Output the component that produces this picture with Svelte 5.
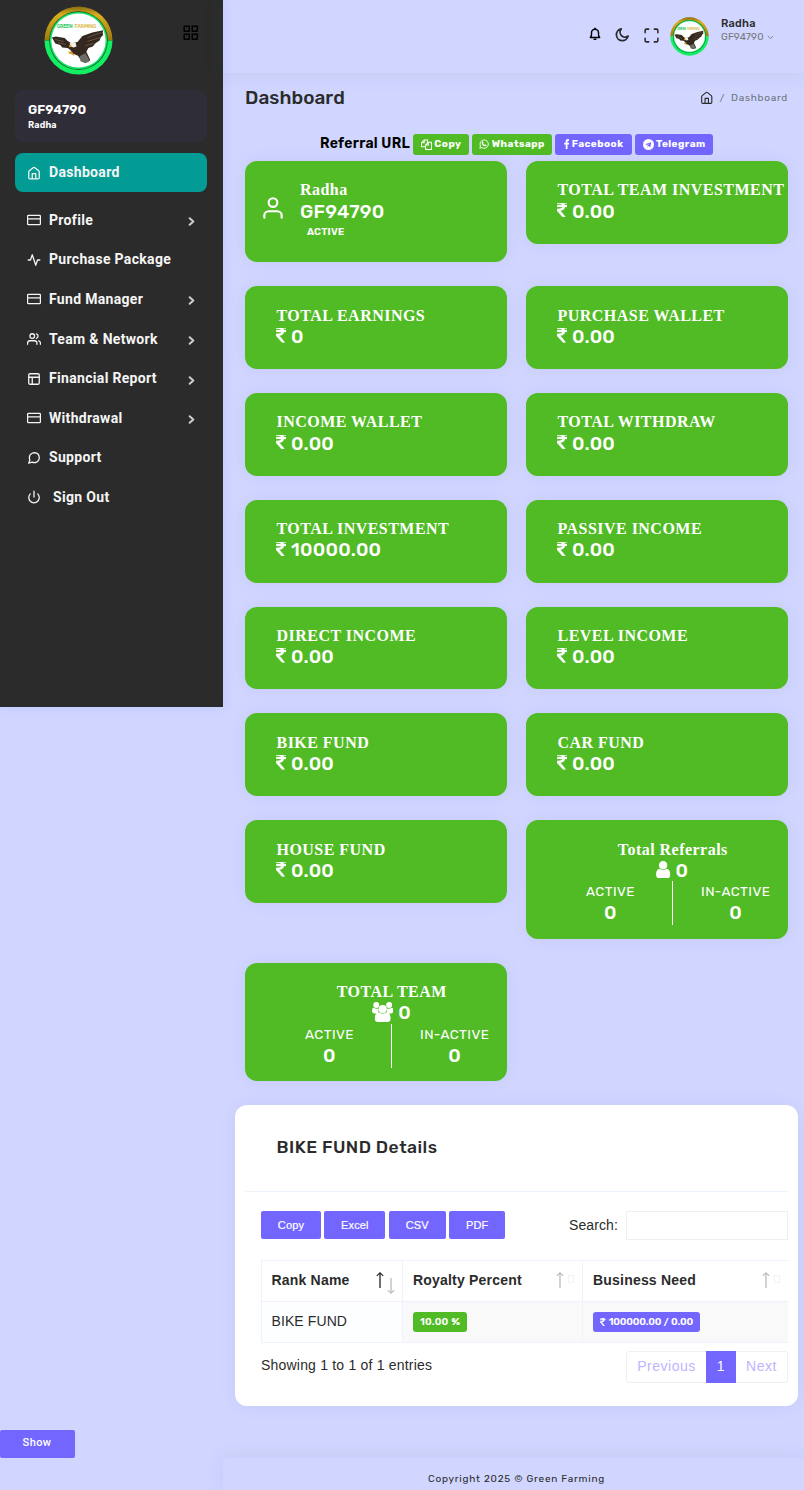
<script>
  const menu = [
    { label: 'Dashboard', icon: 'home', active: true },
    { label: 'Profile', icon: 'card', sub: true },
    { label: 'Purchase Package', icon: 'pulse' },
    { label: 'Fund Manager', icon: 'card', sub: true },
    { label: 'Team & Network', icon: 'users', sub: true },
    { label: 'Financial Report', icon: 'layout', sub: true },
    { label: 'Withdrawal', icon: 'card', sub: true },
    { label: 'Support', icon: 'chat' },
    { label: 'Sign Out', icon: 'power', indent: true }
  ];
  const funds = [
    ['TOTAL EARNINGS', '0'],
    ['PURCHASE WALLET', '0.00'],
    ['INCOME WALLET', '0.00'],
    ['TOTAL WITHDRAW', '0.00'],
    ['TOTAL INVESTMENT', '10000.00'],
    ['PASSIVE INCOME', '0.00'],
    ['DIRECT INCOME', '0.00'],
    ['LEVEL INCOME', '0.00'],
    ['BIKE FUND', '0.00'],
    ['CAR FUND', '0.00'],
    ['HOUSE FUND', '0.00']
  ];
  const exports = [['Copy', 60], ['Excel', 61], ['CSV', 57], ['PDF', 56]];
</script>

{#snippet logo(size)}
  <svg width={size} height={size} viewBox="0 0 70 70">
    <defs>
      <linearGradient id="gold{size}" x1="0" x2="0" y1="0" y2="1">
        <stop offset="0" stop-color="#8a6a10" /><stop offset=".25" stop-color="#d9ae1c" /><stop offset="1" stop-color="#9a7a10" />
      </linearGradient>
    </defs>
    <path d="M.5 35a34.5 34.5 0 0 1 69 0z" fill="url(#gold{size})" />
    <path d="M.5 35a34.5 34.5 0 0 0 69 0z" fill="#14ee62" />
    <circle cx="35" cy="35" r="29.7" fill="#174d2b" />
    <circle cx="35" cy="35" r="29" fill="#14e565" />
    <circle cx="35" cy="35" r="27.5" fill="#fff" />
    <text x="13" y="22.7" font-size="5.2" font-weight="500" textLength="16" fill="#18c860">GREEN</text>
    <text x="31" y="22.7" font-size="5.2" font-weight="500" textLength="22" fill="#dcb640">FARMING</text>
    <path d="M8 32l4-1 9 1.500 3 3 3.500 2 6.500-1 5-6 10-3.500 11-2.500-.5 3 .5 2-2.500 2.500-1 3-4 2.500-3 3.500-4.500 1.500-2 4 4 8.500-3 2-5.500-.5-4-6-5-2-3-4-2.500-2-5.500-.5-2-2.500-5-1.500z" fill="#342820" />
    <path d="M11 34l9 2M14 37l8 2M58 27l-14 5M57 32l-13 4M51 38l-9 2" stroke="#715d4a" stroke-width=".8" />
    <path d="M36 51l6-3 3 5 1 3-4 2-5-2z" fill="#6c6c66" />
    <path d="M26 38l2-2 4 1 1 4-3 1-3-1z" fill="#f4eee3" />
    <path d="M25 40l2-1 1 2-2 1zM25 46l4 1 2 4-3-2-3-1z" fill="#d99b1c" />
  </svg>
{/snippet}

{#snippet icon(name, size = 16, sw = 2)}
  <svg width={size} height={size} viewBox="0 0 24 24" fill="none" stroke="currentColor" stroke-width={sw} stroke-linecap="round" stroke-linejoin="round">
    {#if name === 'home'}<path d="M3 10.2Q3 9 4 8.2l6.6-5.4q1.4-1.1 2.8 0L20 8.2q1 .8 1 2V20q0 2-2 2H5q-2 0-2-2zM9 22v-9h6v9" />
    {:else if name === 'card'}<rect x="1" y="4" width="22" height="16" rx="1.5" /><path d="M1 10h22" />
    {:else if name === 'pulse'}<path d="M22 12h-4l-3 9L9 3l-3 9H2" />
    {:else if name === 'users'}<path d="M17 21v-2a4 4 0 0 0-4-4H5a4 4 0 0 0-4 4v2M23 21v-2a4 4 0 0 0-3-3.87M16 3.13a4 4 0 0 1 0 7.75" /><circle cx="9" cy="7" r="4" />
    {:else if name === 'layout'}<rect x="3" y="3" width="18" height="18" rx="2" /><path d="M3 9h18M9 21V9" />
    {:else if name === 'chat'}<path d="M21 11.5a8.38 8.38 0 0 1-.9 3.8 8.5 8.5 0 0 1-7.6 4.7 8.38 8.38 0 0 1-3.8-.9L3 21l1.9-5.7a8.38 8.38 0 0 1-.9-3.8 8.5 8.5 0 0 1 4.7-7.6 8.38 8.38 0 0 1 3.8-.9h.5a8.48 8.48 0 0 1 8 8z" />
    {:else if name === 'power'}<path d="M18.36 6.64a9 9 0 1 1-12.73 0M12 2v10" />
    {:else if name === 'user'}<path d="M20 21v-2a4 4 0 0 0-4-4H8a4 4 0 0 0-4 4v2" /><circle cx="12" cy="7" r="4" />
    {:else if name === 'grid'}<rect x="3" y="3" width="7" height="7" /><rect x="14" y="3" width="7" height="7" /><rect x="14" y="14" width="7" height="7" /><rect x="3" y="14" width="7" height="7" />
    {:else if name === 'expand'}<path d="M8 3H5a2 2 0 0 0-2 2v3M16 3h3a2 2 0 0 1 2 2v3M21 16v3a2 2 0 0 1-2 2h-3M3 16v3a2 2 0 0 0 2 2h3" />
    {:else if name === 'bell'}<path d="M4 18h16q-2-2-2-5v-3a6 6 0 0 0-12 0v3q0 3-2 5z" /><path d="M10.5 21h3M12 2v2" />
    {:else if name === 'moon'}<path d="M21 14.5A9.5 9.5 0 1 1 10 3a8 8 0 0 0 11 11.5z" />
    {:else if name === 'right'}<path d="M8 5l8 7-8 7" />
    {:else if name === 'down'}<path d="M4 8l8 8 8-8" />
    {/if}
  </svg>
{/snippet}

{#snippet arrow(down = false)}
  <svg class="arrow" class:down width="8" height="16" viewBox="0 0 8 16" fill="none" stroke="currentColor"><path d="M4 1v15" stroke-width="1.300" /><path d="M.800 3.800L4 .800l3.200 3" stroke-width="1.100" /></svg>
{/snippet}

{#snippet glyph(name, h)}
  {#if name === 'inr'}
    <svg class="glyph" height={h} width={h * 0.71} viewBox="446 256 900 1280" fill="currentColor"><path stroke="currentColor" stroke-width="20" d="M1345 470v102q0 14-9 23t-23 9h-168q-23 144-129 234t-276 110q167 178 459 536 14 16 4 34-8 18-29 18h-195q-16 0-25-12-306-367-498-571-9-9-9-22v-127q0-13 9.5-22.5t22.5-9.5h112q132 0 212.500-43t102.500-125h-427q-14 0-23-9t-9-23v-102q0-14 9-23t23-9h413q-57-113-268-113h-145q-13 0-22.500-9.500t-9.500-22.500v-133q0-14 9-23t23-9h832q14 0 23 9t9 23v102q0 14-9 23t-23 9h-233q47 61 64 144h171q14 0 23 9t9 23z" /></svg>
  {:else if name === 'person'}
    <svg class="glyph" height={h} width={h * 0.84} viewBox="256 128 1280 1536" fill="currentColor"><path d="M1536 1399q0 109-62.5 187t-150.5 78h-854q-88 0-150.5-78t-62.5-187q0-85 8.5-160.5t31.5-152 58.5-131 94-89 134.5-34.5q131 128 313 128t313-128q76 0 134.5 34.5t94 89 58.5 131 31.5 152 8.5 160.5zm-256-887q0 159-112.5 271.5t-271.5 112.5-271.5-112.5-112.5-271.5 112.5-271.5 271.5-112.5 271.5 112.5 112.5 271.5z" /></svg>
  {:else if name === 'people'}
    <svg class="glyph" height={h} width={h * 1.07} viewBox="0 0 30 28" fill="currentColor"><circle cx="6" cy="4.200" r="4.200" /><circle cx="24" cy="4.200" r="4.200" /><path d="M0 12.500Q0 8 2.500 8 6 10.500 9.500 9 8.500 13.500 9 16H3q-3 0-3-3.500zM30 12.500Q30 8 27.500 8 24 10.500 20.500 9q1 4.500.5 7h6q3 0 3-3.500z" /><circle cx="15" cy="10" r="5.700" /><path d="M4 23.500q0-9 5.200-9 5.800 4 11.600 0 5.200 0 5.200 9 0 4.500-4.500 4.500h-13Q4 28 4 23.500z" /></svg>
  {:else if name === 'copy'}
    <svg class="glyph" height={h} width={h} viewBox="0 0 24 24" fill="none" stroke="currentColor" stroke-width="2.200"><path d="M10 17H1V8l6-6h7v5M7 2v6H1M10 13l6-6h7v16H10zM16 7v6h-6" /></svg>
  {:else if name === 'whatsapp'}
    <svg class="glyph" height={h} width={h} viewBox="0 0 24 24"><path d="M2 22l1.500-5.200A10 10 0 1 1 7 20.700z" fill="none" stroke="currentColor" stroke-width="2.200" /><path d="M7 7q2-2 3 0l.8 2q0 1-1 1.700 1.400 2.600 4 3.500l1.500-1.500 2.700 1.500q0 3-3 3.200Q8 17 6.500 9.500q0-1.500.5-2.500z" fill="currentColor" /></svg>
  {:else if name === 'facebook'}
    <svg class="glyph" height={h} width={h * 0.55} viewBox="479 0 864 1664" fill="currentColor"><path d="M1343 12v264h-157q-86 0-116 36t-30 108v189h293l-39 296h-254v759h-306v-759h-255v-296h255v-218q0-186 104-288.500t277-102.500q147 0 228 12z" /></svg>
  {:else if name === 'telegram'}
    <svg class="glyph" height={h} width={h} viewBox="0 0 24 24"><path fill="currentColor" fill-rule="evenodd" d="M12 0a12 12 0 1 0 0 24 12 12 0 0 0 0-24zm6 6.500L15.700 18l-3.800-2.700-2.200 2-.4-4L5 11.700zm-2.300 2.300L9.300 13l1 2.200.3-1.500z" /></svg>
  {/if}
{/snippet}

<div class="page">
  <div class="left">
    <aside>
      <div class="brand">{@render logo(69)}<span>{@render icon('grid', 17.500, 2)}</span></div>
      <div class="account"><b>GF94790</b><small>Radha</small></div>
      <nav>
        {#each menu as m}
          <a class:active={m.active}>
            <i>{@render icon(m.icon, 14, 2.200)}</i><span class:indent={m.indent}>{m.label}</span>
            {#if m.sub}<em>{@render icon('right', 11, 4.500)}</em>{/if}
          </a>
        {/each}
      </nav>
    </aside>
    <button class="show">Show</button>
  </div>

  <div class="main">
    <header>
      <span class="bell">{@render icon('bell', 14, 2.500)}</span>
      <span class="moon">{@render icon('moon', 15, 2.800)}</span>
      <span class="expand">{@render icon('expand', 17, 2.200)}</span>
      {@render logo(39)}
      <div class="who"><b>Radha</b><span>GF94790 {@render icon('down', 7, 3)}</span></div>
    </header>
    <div class="title">
      <h1>Dashboard</h1>
      <div class="crumbs">{@render icon('home', 13.500, 2)}<span>/</span><span class="here">Dashboard</span></div>
    </div>
    <div class="referral">
      <b>Referral URL</b>
      <span class="tag green" style:width="56px">{@render glyph('copy', 11)}Copy</span>
      <span class="tag green" style:width="80px">{@render glyph('whatsapp', 10)}Whatsapp</span>
      <span class="tag" style:width="77px">{@render glyph('facebook', 10)}Facebook</span>
      <span class="tag" style:width="78px">{@render glyph('telegram', 11)}Telegram</span>
    </div>

    <section class="cards">
      <div class="card member">
        {@render icon('user', 26, 2)}
        <div><h6>Radha</h6><strong>GF94790</strong><small>ACTIVE</small></div>
      </div>
      <div class="card"><h6>TOTAL TEAM INVESTMENT</h6><strong>{@render glyph('inr', 14.500)}0.00</strong></div>
      {#each funds as [name, value]}
        <div class="card"><h6>{name}</h6><strong>{@render glyph('inr', 14.500)}{value}</strong></div>
      {/each}
      {#each [['Total Referrals', 'person', 17], ['TOTAL TEAM', 'people', 20]] as [name, g, h]}
        <div class="card split">
          <h6>{name}</h6>
          <strong>{@render glyph(g, h)}0</strong>
          <div class="halves">
            <div><span>ACTIVE</span><strong>0</strong></div>
            <div><span>IN-ACTIVE</span><strong>0</strong></div>
          </div>
        </div>
      {/each}
    </section>

    <section class="panel">
      <h2>BIKE FUND Details</h2>
      <div class="body">
        <div class="tools">
          <div class="exports">{#each exports as [name, w]}<button style:width="{w}px">{name}</button>{/each}</div>
          <label>Search: <input aria-label="Search" /></label>
        </div>
        <div class="scroll">
          <table>
            <thead><tr>
              <th class="c1">Rank Name<span class="sort on">{@render arrow()}{@render arrow(true)}</span></th>
              <th class="c2">Royalty Percent<span class="sort">{@render arrow()}<u></u></span></th>
              <th class="c3">Business Need<span class="sort">{@render arrow()}<u></u></span></th>
            </tr></thead>
            <tbody><tr>
              <td>BIKE FUND</td>
              <td><span class="badge green">10.00 <b>%</b></span></td>
              <td><span class="badge need">{@render glyph('inr', 8)}100000.00 / 0.00</span></td>
            </tr></tbody>
          </table>
        </div>
        <div class="foot">
          <span>Showing 1 to 1 of 1 entries</span>
          <div class="pager"><span class="prev">Previous</span><span class="cur">1</span><span class="next">Next</span></div>
        </div>
      </div>
    </section>
    <footer>Copyright 2025 © Green Farming</footer>
  </div>
</div>

<style>
  :global(body) { background: #d0d6ff; overflow: hidden; }
  * { box-sizing: border-box; }
  .page { display: flex; width: 804px; height: 1490px; overflow: hidden; font-family: Rubik, Roboto, sans-serif; color: #2b2b2b; }
  svg { display: block; flex: none; }
  h1, h2, h6 { margin: 0; }
  button { border: 0; padding: 0; background: #7366ff; color: #fff; }
  .left { width: 223px; flex: none; display: flex; flex-direction: column; justify-content: space-between; padding-bottom: 32px; }
  aside { height: 707px; background: #2b2b2b; padding: 6px 16px 0 15px; box-shadow: 0 0 11px rgba(69, 110, 243, .13); color: #fff; }
  .brand { display: flex; justify-content: space-between; padding: 0 8px 0 29px; height: 84px; }
  .brand span { color: #000; padding-top: 18px; }
  .account { height: 52px; border-radius: 8px; background: #2f2d37; display: flex; flex-direction: column; padding: 12px 13px; }
  .account b { font-size: 13px; line-height: 16px; font-weight: 600; letter-spacing: .1px; }
  .account small { font-size: 9px; line-height: 14px; font-weight: 600; letter-spacing: .15px; }
  nav { margin-top: 11px; }
  nav a { display: flex; align-items: center; height: 39.600px; padding: 0 10px 0 12px; font: 700 14px Roboto, sans-serif; letter-spacing: .32px; color: #f5f5f5; }
  nav a.active { background: #029c95; border-radius: 8px; height: 39px; margin-bottom: 8px; padding-bottom: 1px; }
  nav i { width: 22px; padding-top: 1px; }
  nav span.indent { padding-left: 4px; }
  nav em { margin-left: auto; padding-top: 4px; color: #ccc; }
  .show { width: 75px; height: 28px; border-radius: 2px; padding: 0 1px 3px 0; font: 500 11px Roboto, sans-serif; letter-spacing: .4px; }

  .main { width: 581px; display: flex; flex-direction: column; }
  header { height: 73px; flex: none; display: flex; align-items: center; padding-left: 365px; box-shadow: 0 0 20px rgba(89, 102, 122, .1); }
  header > :global(svg) { margin: 0 0 1px 10px; }
  .bell { color: #000; padding-bottom: 5px; }
  .moon { margin-left: 13px; padding-bottom: 5px; }
  .expand { margin-left: 13px; padding-bottom: 2px; }
  .who { margin-left: 12px; padding-bottom: 12px; }
  .who b { display: block; font-size: 11px; font-weight: 500; line-height: 14px; letter-spacing: .2px; }
  .who span { display: flex; align-items: center; gap: 3px; font-size: 10px; line-height: 13px; letter-spacing: .1px; color: #777; }
  .title { height: 58px; display: flex; justify-content: space-between; padding: 12px 16px 0 22px; }
  h1 { font-size: 19px; font-weight: 500; line-height: 25px; letter-spacing: .05px; }
  .crumbs { display: flex; align-items: center; height: 25px; gap: 6px; font-size: 10px; letter-spacing: .72px; color: #6c757d; }
  .crumbs :global(svg) { color: #2b2b2b; }
  .referral { display: flex; justify-content: center; align-items: center; gap: 3px; height: 27px; padding-left: 6px; margin: 0 0 3px; color: #000; font-size: 14px; letter-spacing: .2px; }
  .referral > b { font-weight: 600; letter-spacing: .3px; white-space: nowrap; padding-bottom: 2px; }
  .tag { height: 21px; border-radius: 3px; display: flex; align-items: center; justify-content: center; gap: 2.500px; background: #7366ff; color: #fff; font-size: 10px; font-weight: 700; letter-spacing: .45px; padding-bottom: 1px; }
  .green { background: #51bb25 !important; }

  .cards { display: grid; grid-template-columns: 262px 262px; column-gap: 19px; row-gap: 24px; align-items: start; padding-left: 22px; }
  .card { height: 82.800px; border-radius: 12px; background: #51bb25; color: #fff; padding: 18.300px 0 0 31.500px; box-shadow: 0 0 20px rgba(8, 21, 66, .05); }
  h6 { font: 700 16px/21px "Liberation Serif", serif; letter-spacing: .47px; white-space: nowrap; }
  strong { display: flex; align-items: center; gap: 5px; height: 21.500px; font-size: 19px; font-weight: 500; letter-spacing: .25px; }
  .card strong > :global(.glyph) { margin-left: -.8px; margin-bottom: 2px; }
  .card.member { height: 101.250px; display: flex; padding-left: 15px; }
  .member > :global(svg) { margin: 16px 14px 0 0; }
  .member small { display: block; margin-left: 7px; font-size: 10px; line-height: 20px; font-weight: 600; letter-spacing: .2px; }
  .split { height: 118.600px; text-align: center; }
  .split strong { justify-content: center; }
  .halves { display: grid; grid-template-columns: 115.800px 1fr; }
  .halves > div { height: 44px; padding-left: 10px; }
  .halves > div:first-child { padding: 0; border-right: 1px solid #fff; }
  .halves span { display: block; font-size: 13.500px; line-height: 21px; letter-spacing: .4px; }
  .halves > div:first-child span, .halves > div:first-child strong { padding-right: 9px; }

  .panel { flex: none; width: 563px; height: 301px; margin: 24px 0 0 12px; background: #fff; border-radius: 12px; box-shadow: 0 0 20px rgba(8, 21, 66, .05); padding: 0 10px; font-family: "Liberation Sans", sans-serif; }
  h2 { height: 87px; padding: 30px 0 0 31.500px; border-bottom: 1px solid #ecf3fa; font: 500 17.500px/24px Rubik, Roboto, sans-serif; letter-spacing: .45px; }
  .body { padding: 19px 0 0 16px; font-size: 14px; }
  .tools { display: flex; justify-content: space-between; height: 49px; }
  .exports { display: flex; gap: 3.400px; }
  .exports button { height: 28px; border-radius: 2px; font: 11px "Liberation Sans", sans-serif; letter-spacing: .15px; -webkit-text-stroke: .2px #fff; }
  label { display: flex; align-items: center; height: 28px; gap: 8px; letter-spacing: .1px; }
  input { width: 162px; height: 29px; border: 1px solid #efefef; background: #fff; }
  .scroll { overflow: hidden; height: 83px; }
  table { width: 540px; table-layout: fixed; border-collapse: collapse; letter-spacing: .1px; }
  .c1 { width: 141px; } .c2 { width: 180px; }
  th, td { height: 41px; padding: 0 10px; text-align: left; border: 1px solid #f0f1fe; }
  th:first-child, td:first-child { padding-left: 9.500px; }
  th { font-size: 14px; letter-spacing: .2px; white-space: nowrap; padding-bottom: 3px; }
  td { background: #f9f9f9; }
  td:first-child { background: #fdfeff; padding-bottom: 2px; }
  .sort { float: right; display: flex; gap: 3px; height: 16px; margin-right: -2px; color: #bbb; }
  .sort.on { margin-right: -3px; }
  .c3 .sort { margin-right: 10px; }
  .sort.on :global(.arrow:first-child) { color: #222; }
  .sort :global(.down) { transform: translateY(6px) scaleY(-1); }
  .sort u { width: 6px; height: 8px; margin: 3px 0 0 1px; border: 1px solid #f2f2f2; }
  .badge { display: inline-flex; align-items: center; gap: 3px; height: 20px; padding: 0 7px; border-radius: 3px; background: #7366ff; color: #fff; font: 600 10px Rubik, Roboto, sans-serif; letter-spacing: .2px; vertical-align: middle; }
  .badge.need { letter-spacing: -.18px; word-spacing: .4px; }
  .badge b { font-weight: 900; }
  .foot { display: flex; justify-content: space-between; padding-top: 8px; }
  .foot > span { padding-top: 6px; letter-spacing: .2px; }
  .pager { display: flex; height: 32px; border: 1px solid #f0f0f0; border-radius: 3px; color: #bcb5ff; letter-spacing: .5px; }
  .pager span { display: flex; align-items: center; justify-content: center; padding-bottom: 2px; }
  .prev { width: 79px; } .next { width: 51px; }
  .pager .cur { width: 30px; margin: -1px 0; background: #7366ff; color: #fff; }
  footer { margin-top: auto; height: 32px; padding: 14px 0 0 6px; text-align: center; font-size: 10px; line-height: 15px; letter-spacing: .77px; box-shadow: 0 0 20px rgba(89, 102, 122, .1); }
</style>
